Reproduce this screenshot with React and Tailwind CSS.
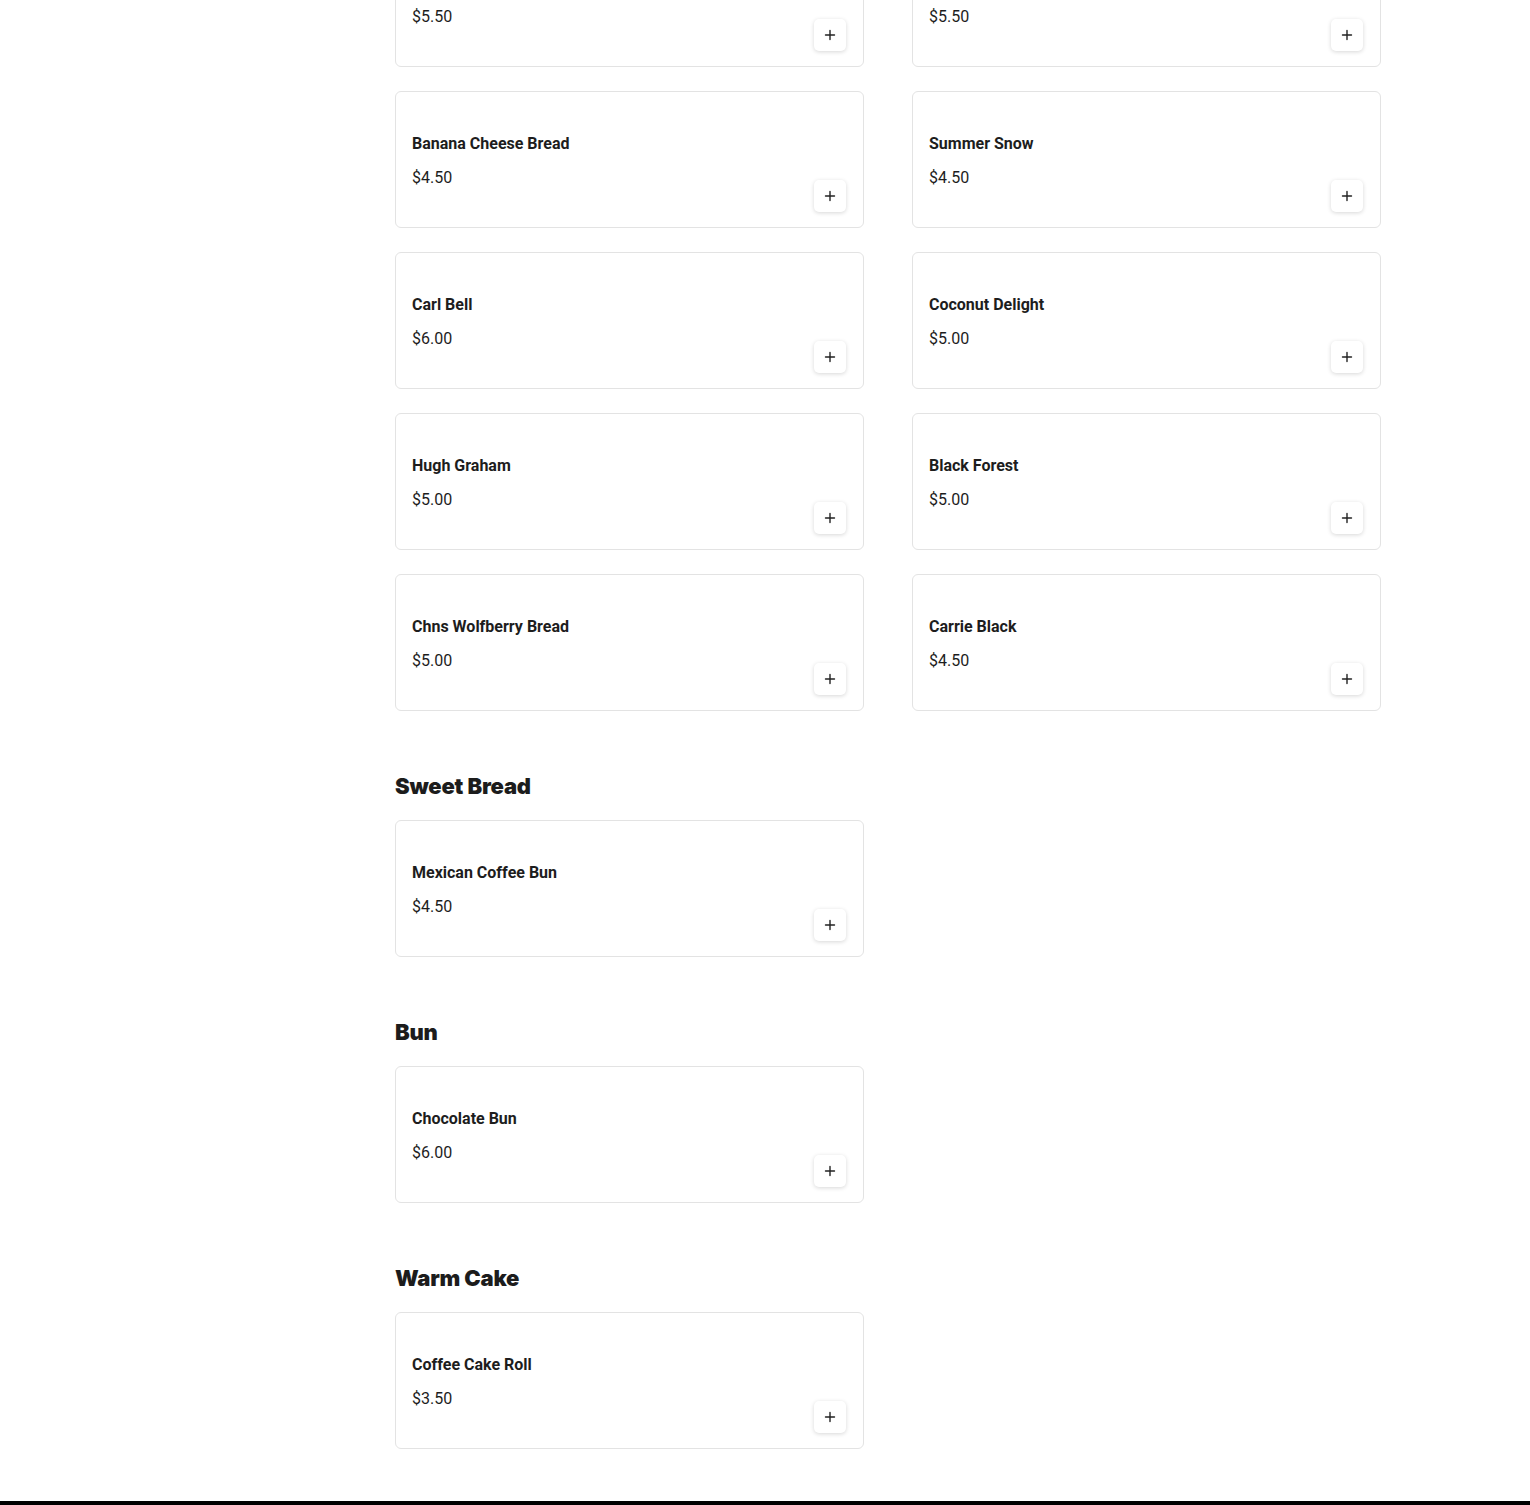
import React from "react";

const bread = [
  [{ name: "Taro Bread", price: "$5.50" }, { name: "Pineapple Bun", price: "$5.50" }],
  [{ name: "Banana Cheese Bread", price: "$4.50" }, { name: "Summer Snow", price: "$4.50" }],
  [{ name: "Carl Bell", price: "$6.00" }, { name: "Coconut Delight", price: "$5.00" }],
  [{ name: "Hugh Graham", price: "$5.00" }, { name: "Black Forest", price: "$5.00" }],
  [{ name: "Chns Wolfberry Bread", price: "$5.00" }, { name: "Carrie Black", price: "$4.50" }],
];

const sections = [
  { title: "Sweet Bread", items: [{ name: "Mexican Coffee Bun", price: "$4.50" }] },
  { title: "Bun", items: [{ name: "Chocolate Bun", price: "$6.00" }] },
  { title: "Warm Cake", items: [{ name: "Coffee Cake Roll", price: "$3.50" }] },
];

function PlusIcon() {
  return (
    <svg width="12" height="12" viewBox="0 0 12 12" fill="none">
      <path d="M6 1.5v9M1.5 6h9" stroke="#222" strokeWidth="1.4" strokeLinecap="round" />
    </svg>
  );
}

function Card({ item }) {
  return (
    <div className="flex h-[137px] items-end justify-between rounded-[6px] border border-[#e3e3e3] bg-white pl-4 pr-[17px] pb-[15px] pt-[40px]">
      <div className="flex flex-col gap-[10px] self-start">
        <div className="text-[16px] font-[700] leading-[24px] text-[#1d1d1d]">{item.name}</div>
        <div className="text-[16px] font-normal leading-[24px] text-[#1d1d1d]">{item.price}</div>
      </div>
      <button className="flex h-8 w-8 items-center justify-center rounded-[5px] bg-white shadow-[0_1px_4px_rgba(0,0,0,0.16)]">
        <PlusIcon />
      </button>
    </div>
  );
}

export default function App() {
  return (
    <div className="min-h-[1505px] overflow-hidden bg-white font-['Roboto',sans-serif]">
      <div className="ml-[395px] -mt-[70px] w-[986px]">
        <div className="grid grid-cols-2 gap-x-[48px] gap-y-6">
          {bread.flat().map((item, i) => (
            <Card key={i} item={item} />
          ))}
        </div>
        {sections.map((s) => (
          <div key={s.title} className="mt-[59px]">
            <h2 className="mb-[18px] font-['Inter',sans-serif] text-[22px] font-black leading-[32px] tracking-[-0.2px] text-[#1c1c1c]">
              {s.title}
            </h2>
            <div className="grid grid-cols-2 gap-x-[48px] gap-y-6">
              {s.items.map((item) => (
                <Card key={item.name} item={item} />
              ))}
            </div>
          </div>
        ))}
      </div>
      <div className="mt-[52px] h-[4px] w-full bg-black" />
    </div>
  );
}
